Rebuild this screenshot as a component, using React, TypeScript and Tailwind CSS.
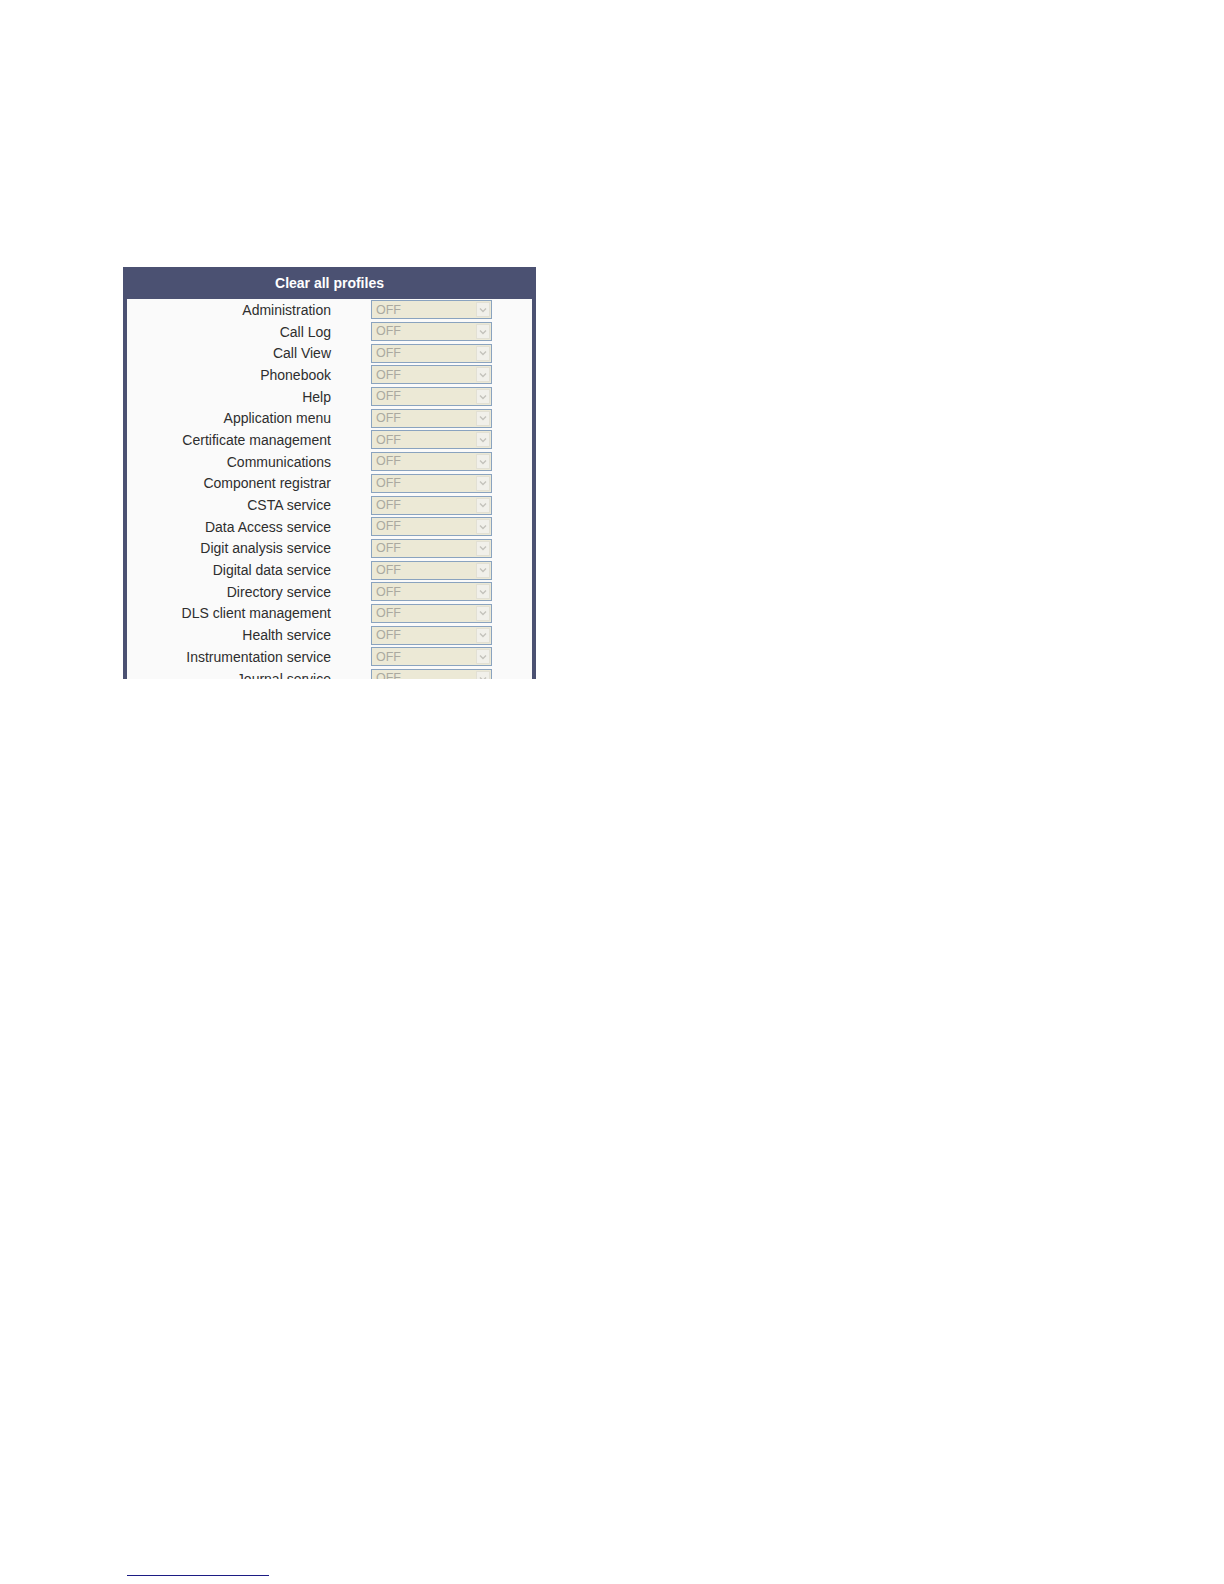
const SERVICES = [
  "Administration",
  "Call Log",
  "Call View",
  "Phonebook",
  "Help",
  "Application menu",
  "Certificate management",
  "Communications",
  "Component registrar",
  "CSTA service",
  "Data Access service",
  "Digit analysis service",
  "Digital data service",
  "Directory service",
  "DLS client management",
  "Health service",
  "Instrumentation service",
  "Journal service",
];

function OffSelect() {
  return (
    <div className="flex h-[19px] w-[121px] items-stretch border border-[#8aa3bf] bg-[#ece9d6]">
      <span className="flex flex-1 items-center pl-[4px] text-[12.5px] leading-none text-[#aaa9a0]">OFF</span>
      <span className="m-[1px] flex w-[14px] items-center justify-center border border-[#e2e0d4] bg-[#f1f0ea]">
        <svg width="8" height="6" viewBox="0 0 8 6" fill="none">
          <path d="M1 1.5 L4 4.5 L7 1.5" stroke="#c4c3bc" strokeWidth="1.4" />
        </svg>
      </span>
    </div>
  );
}

export default function App() {
  return (
    <div className="min-h-[1584px] bg-white pl-[123px] pt-[267px] font-['Liberation_Sans',Arial,sans-serif]">
      <div className="h-[412px] w-[413px] overflow-hidden bg-[#4b5172]">
        <div className="flex h-[32px] items-center justify-center text-[14px] font-bold text-white">
          Clear all profiles
        </div>
        <div className="mx-[4px] bg-[#fafafa]">
          {SERVICES.map((name) => (
            <div key={name} className="flex h-[21.7px] items-center">
              <span className="w-[204px] text-right text-[14px] leading-none text-[#2e2e2e]">{name}</span>
              <span className="ml-[40px]">
                <OffSelect />
              </span>
            </div>
          ))}
        </div>
      </div>
      <div className="ml-[4px] mt-[896px] h-px w-[142px] bg-[#1c1c84]" />
    </div>
  );
}
